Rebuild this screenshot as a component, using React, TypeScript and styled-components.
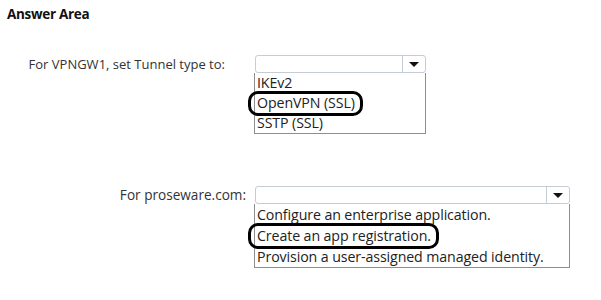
import styled, { createGlobalStyle } from 'styled-components'

const GlobalStyle = createGlobalStyle`
    html, body {
        margin: 0;
        padding: 0;
        background: #ffffff;
    }
    body {
        font-family: "Open Sans", "Noto Sans", sans-serif;
        color: #2b2b2b;
    }
`

const Page = styled.div`
    width: 601px;
    height: 300px;
    position: relative;
    overflow: hidden;
`

const Title = styled.div`
    font-size: 13.5px;
    font-weight: 700;
    color: #111;
    padding: 5px 0 0 7px;
    letter-spacing: -0.3px;
`

const Question = styled.div<{ $top: number }>`
    display: grid;
    grid-template-columns: 255px auto;
    margin-top: ${props => props.$top}px;
`

const Label = styled.div<{ $gap: number; $size: number }>`
    font-size: ${props => props.$size}px;
    text-align: right;
    padding-right: ${props => props.$gap}px;
    height: 18px;
    line-height: 18px;
    color: #333;
`

const Picker = styled.div<{ $width: number }>`
    width: ${props => props.$width}px;
`

const SelectBox = styled.div`
    display: flex;
    height: 16px;
    border: 1px solid #c4ccd6;
    border-radius: 3px;
    background: #fff;
`

const SelectValue = styled.div`
    flex: 1;
`

const ArrowCell = styled.div`
    width: 22px;
    border-left: 1px solid #c4ccd6;
    display: flex;
    align-items: center;
    justify-content: center;
`

const Arrow = styled.div`
    width: 0;
    height: 0;
    border-left: 5px solid transparent;
    border-right: 5px solid transparent;
    border-top: 5px solid #111;
`

const List = styled.div`
    border: 1px solid #8e8e8e;
    border-top: none;
    margin-left: -1px;
    background: #fff;
`

const Item = styled.div<{ $height: number }>`
    height: ${props => props.$height}px;
    line-height: ${props => props.$height}px;
    font-size: 14.2px;
    padding-left: 2px;
    color: #222;
    white-space: nowrap;
    letter-spacing: -0.1px;
`

const ItemText = styled.span<{ $picked?: boolean }>`
    position: relative;
    display: inline-block;
    &::after {
        content: '';
        display: ${props => props.$picked ? 'block' : 'none'};
        position: absolute;
        left: -9px;
        right: -8px;
        top: -2px;
        bottom: -3px;
        border: 3.5px solid #000;
        border-radius: 10px;
    }
`

type Dropdown = {
    label: string
    labelSize: number
    gap: number
    top: number
    width: number
    rowHeight: number
    options: string[]
    picked: number
}

const questions: Dropdown[] = [
    {
        label: 'For VPNGW1, set Tunnel type to:',
        labelSize: 13,
        gap: 30,
        top: 32,
        width: 171,
        rowHeight: 20,
        options: ['IKEv2', 'OpenVPN (SSL)', 'SSTP (SSL)'],
        picked: 1,
    },
    {
        label: 'For proseware.com:',
        labelSize: 13.6,
        gap: 9,
        top: 52,
        width: 315,
        rowHeight: 21,
        options: [
            'Configure an enterprise application.',
            'Create an app registration.',
            'Provision a user-assigned managed identity.',
        ],
        picked: 1,
    },
]

export default function App() {
    return (
        <Page>
            <GlobalStyle />
            <Title>Answer Area</Title>
            {questions.map(q => (
                <Question key={q.label} $top={q.top}>
                    <Label $gap={q.gap} $size={q.labelSize}>{q.label}</Label>
                    <Picker $width={q.width}>
                        <SelectBox>
                            <SelectValue />
                            <ArrowCell>
                                <Arrow />
                            </ArrowCell>
                        </SelectBox>
                        <List>
                            {q.options.map((opt, i) => (
                                <Item key={opt} $height={q.rowHeight}>
                                    <ItemText $picked={i === q.picked}>{opt}</ItemText>
                                </Item>
                            ))}
                        </List>
                    </Picker>
                </Question>
            ))}
        </Page>
    )
}
